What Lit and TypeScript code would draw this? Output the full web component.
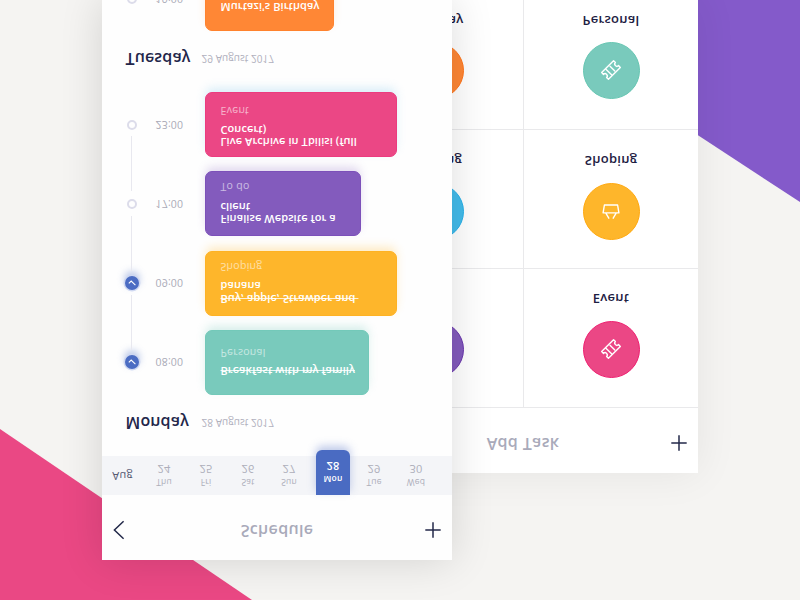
import { LitElement, html, css, svg, nothing } from "lit";
import { customElement, property } from "lit/decorators.js";
import { classMap } from "lit/directives/class-map.js";

interface Task {
  time: string;
  lines: string[];
  kind: string;
  tone: string;
  width: number;
  done?: boolean;
  link?: boolean;
}

const MONDAY: Task[] = [
  { time: "08:00", lines: ["Breakfast with my family"], kind: "Personal", tone: "teal", width: 163.5, done: true, link: true },
  { time: "09:00", lines: ["Buy, apple, Strawber and\u00a0", "banana"], kind: "Shoping", tone: "amber", width: 192, done: true, link: true },
  { time: "17:00", lines: ["Finalise Website for a", "client"], kind: "To do", tone: "violet", width: 156, link: true },
  { time: "23:00", lines: ["Live Archive in Tbilisi (full", "Concert)"], kind: "Event", tone: "pink", width: 192 },
];

const TUESDAY: Task[] = [
  { time: "19:00", lines: ["Murtazi's Birthday"], kind: "Birthday", tone: "orange", width: 128.5 },
];

const DAYS = [
  ["24", "Thu"], ["25", "Fri"], ["26", "Sat"], ["27", "Sun"],
  ["28", "Mon"], ["29", "Tue"], ["30", "Wed"],
];

const TILES = [
  { label: "Todo", tone: "violet", icon: "" },
  { label: "Event", tone: "pink", icon: "ticket" },
  { label: "Meeting", tone: "sky", icon: "" },
  { label: "Shoping", tone: "amber", icon: "basket" },
  { label: "Birthday", tone: "orange", icon: "" },
  { label: "Personal", tone: "teal", icon: "ticket" },
];

const ticket = svg`<g transform="rotate(45)">
  <path d="M-8.4 -4.8H8.4V-2.2A2.2 2.2 0 0 0 8.4 2.2V4.8H-8.4V2.2A2.2 2.2 0 0 0 -8.4 -2.2Z"/>
  <path d="M-3 -4.2V4.2M2 -3.4V3.4" />
</g>`;
const basket = svg`<path d="M-7.9 -1.9H7.9L6.6 6H-6.6Z M-5 -2.4L-2.2 -7.2M5 -2.4L2.2 -7.2"/>`;

const tones = css`
  .teal { --c: #79cabc; --edge: #66c6b2; --glow: rgba(121, 202, 188, 0.3); }
  .amber { --c: #feb62b; --edge: #ffa90f; --glow: rgba(254, 190, 60, 0.3); }
  .violet { --c: #835bbd; --edge: #6b37ae; --glow: rgba(131, 91, 189, 0.24); }
  .pink { --c: #eb4785; --edge: #ee1f70; --glow: rgba(130, 200, 235, 0.3); }
  .orange { --c: #ff8735; --edge: #ff751a; --glow: rgba(255, 135, 53, 0.2); }
  .sky { --c: #43bceb; --edge: #26b1ea; --glow: transparent; }
`;

const plus = html`<svg class="plus" width="16" height="16" viewBox="0 0 16 16">
  <path d="M8 0.3V15.7M0.3 8H15.7" stroke="#23294a" stroke-width="1.5" fill="none" />
</svg>`;

@customElement("task-row")
export class TaskRow extends LitElement {
  @property({ attribute: false }) task!: Task;

  static styles = [
    tones,
    css`
      :host { display: grid; grid-template-columns: 60px 43px 1fr; height: 65px; }
      .rail { position: relative; display: flex; align-items: center; justify-content: center; }
      .ring { box-sizing: border-box; width: 10px; height: 10px; border: 2px solid #dcdcea; border-radius: 50%; }
      .check {
        width: 14px; height: 14px; border-radius: 50%; background: #4b6cc3;
        box-shadow: 0 0 0 1.5px #cfd8f1, 0 4px 7px 1px rgba(75, 108, 195, 0.35);
        display: flex; align-items: center; justify-content: center;
      }
      .link { position: absolute; left: 29px; top: 45px; width: 1px; height: 55px; background: #e8e8ef; }
      .time { align-self: center; justify-self: start; margin-left: -6.5px; font-size: 10.5px; color: #a9a9b6; letter-spacing: 0.2px; white-space: nowrap; }
      .card {
        box-sizing: border-box; border-radius: 7px; background: var(--c); color: #fff;
        padding: 17px 0 0 14.5px; font-size: 11px; font-weight: 600; line-height: 12.5px; letter-spacing: 0.09px; white-space: nowrap;
        border: 1px solid color-mix(in srgb, var(--edge) 30%, var(--c));
        box-shadow: 0 5px 10px -1px var(--glow);
      }
      .two { padding-top: 10px; }
      .struck { text-decoration: line-through 1px rgba(255, 255, 255, 0.8); }
      .kind { font-size: 10.5px; font-weight: 400; opacity: 0.58; margin-top: 5px; letter-spacing: 0.3px; }
      .two .kind { margin-top: 7px; }
      .pink.two { padding-top: 8px; }
      .pink.two .kind { margin-top: 6px; }
    `,
  ];

  render() {
    const t = this.task;
    return html`
      <div class="rail">
        ${t.done
          ? html`<div class="check"><svg width="14" height="14" viewBox="0 0 14 14"><path d="M3.8 6.6L6.2 9L10.4 4.9" fill="none" stroke="#fff" stroke-width="1.1" /></svg></div>`
          : html`<div class="ring"></div>`}
        ${t.link ? html`<div class="link"></div>` : nothing}
      </div>
      <div class="time">${t.time}</div>
      <div class=${classMap({ card: true, two: t.lines.length > 1, [t.tone]: true })} style="width:${t.width}px">
        ${t.lines.map((l, i) => html`<div><span class=${t.done && i === 0 ? "struck" : ""}>${l}</span></div>`)}
        <div class="kind">${t.kind}</div>
      </div>
    `;
  }
}

@customElement("app-root")
export class AppRoot extends LitElement {
  static styles = [
    tones,
    css`
      :host { display: block; width: 800px; height: 600px; overflow: hidden; font-family: "Open Sans", "Noto Sans", sans-serif; }
      .stage { position: relative; width: 800px; height: 600px; overflow: hidden; background: #f5f4f2; transform: scaleY(-1); }
      .shape { position: absolute; inset: 0; }
      .phone { position: absolute; width: 350px; background: #fff; overflow: hidden; }
      .add { left: 348px; top: 127px; height: 473px; box-shadow: 0 0 40px rgba(0, 0, 0, 0.07); }
      .schedule { left: 102px; top: 40px; height: 560px; background: #fefefe; box-shadow: 0 0 40px rgba(0, 0, 0, 0.14); }
      .bar { display: grid; grid-template-columns: 50px 1fr 50px; align-items: center; height: 65px; }
      .bar h1 { margin: -7px 0 0; font-size: 16px; font-weight: 600; color: #a9aaba; text-align: center; line-height: 20px; letter-spacing: 0.35px; }
      .bar .plus { display: block; margin: -5px 0 0 22.5px; }
      .back { display: block; margin: -5px 0 0 11px; }
      .week { display: flex; height: 39px; background: #f4f5f8; padding-right: 15px; }
      .month { width: 41px; text-align: center; font-size: 11px; line-height: 38px; color: #565a73; letter-spacing: 0.2px; }
      .day { width: 42px; display: flex; flex-direction: column; align-items: center; padding-top: 7px; box-sizing: border-box; color: #adaeba; }
      .day:nth-child(5) { padding-right: 2px; }
      .dow { font-size: 8.5px; line-height: 12px; letter-spacing: 0.15px; }
      .num { font-size: 11px; line-height: 14px; letter-spacing: 0.2px; }
      .on { color: #fff; font-weight: 600; padding: 0; }
      .tab {
        width: 34.5px; height: 44.5px; flex: none; box-sizing: border-box; padding-top: 9.5px; margin-left: 2px;
        display: flex; flex-direction: column; align-items: center; background: #4a6bc2; border-radius: 0 0 6px 6px;
        box-shadow: 0 4px 9px rgba(74, 107, 194, 0.35); position: relative;
      }
      .date { height: 61px; display: flex; align-items: center; padding: 4px 0 0 23.5px; box-sizing: border-box; white-space: nowrap; }
      .list + .date { padding-top: 5px; }
      .date h2 { margin: 0; width: 76px; font-size: 16px; line-height: 20px; font-weight: 600; color: #23264a; letter-spacing: 0.15px; }
      .date span { font-size: 10px; color: #b0b0bd; letter-spacing: 0.05px; }
      .list { display: grid; gap: 14.3px; }
      .tiles { display: grid; grid-template-columns: 1fr 1fr; grid-auto-rows: 139px; border-top: 1px solid #e9e9eb; }
      .tile { --pad: 29px; --gap: 13px; display: flex; flex-direction: column; align-items: center; box-sizing: border-box; padding-top: var(--pad); border-bottom: 1px solid #e9e9eb; }
      .tile:nth-child(n + 3) { --pad: 28px; }
      .tile:nth-child(n + 5) { --pad: 30px; --gap: 12px; }
      .tile:nth-child(even) { border-left: 1px solid #e9e9eb; }
      .disc { width: 57px; height: 57px; box-sizing: border-box; border-radius: 50%; background: var(--c); border: 1px solid var(--edge); display: flex; align-items: center; justify-content: center; }
      .label { margin-top: var(--gap); font-size: 13px; line-height: 18px; font-weight: 600; color: #1d2042; letter-spacing: 0.25px; }
    `,
  ];

  render() {
    return html`
      <div class="stage">
        <svg class="shape" width="800" height="600" viewBox="0 0 800 600">
          <path d="M0 0H252L0 171Z" fill="#ea4884" />
          <path d="M690 470L800 398V600H690Z" fill="#845aca" />
        </svg>

        <section class="phone add">
          <div class="bar"><span></span><h1>Add Task</h1>${plus}</div>
          <div class="tiles">
            ${TILES.map((t) => html`
              <div class="tile">
                <div class="disc ${t.tone}">
                  ${t.icon
                    ? html`<svg width="26" height="26" viewBox="-13 -13 26 26" fill="none" stroke="#fff" stroke-width="1.4" stroke-linejoin="round" stroke-linecap="round">${t.icon === "ticket" ? ticket : basket}</svg>`
                    : nothing}
                </div>
                <div class="label">${t.label}</div>
              </div>`)}
          </div>
        </section>

        <section class="phone schedule">
          <div class="bar">
            <svg class="back" width="12" height="20" viewBox="0 0 12 20"><path d="M10.6 1.2L1.4 10L10.6 18.8" fill="none" stroke="#23294a" stroke-width="1.5" /></svg>
            <h1>Schedule</h1>${plus}
          </div>
          <div class="week">
            <div class="month">Aug</div>
            ${DAYS.map(([n, d]) => n === "28"
              ? html`<div class="day on"><div class="tab"><span class="dow">${d}</span><span class="num">${n}</span></div></div>`
              : html`<div class="day"><span class="dow">${d}</span><span class="num">${n}</span></div>`)}
          </div>
          <div class="date"><h2>Monday</h2><span>28 August 2017</span></div>
          <div class="list">${MONDAY.map((t) => html`<task-row .task=${t}></task-row>`)}</div>
          <div class="date"><h2>Tuesday</h2><span>29 August 2017</span></div>
          <div class="list">${TUESDAY.map((t) => html`<task-row .task=${t}></task-row>`)}</div>
        </section>
      </div>
    `;
  }
}
